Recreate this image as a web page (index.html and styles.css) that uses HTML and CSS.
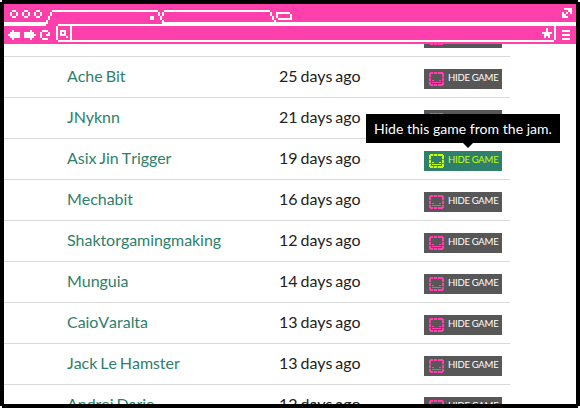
FILE: index.html
```html
<!DOCTYPE html>
<html lang="en">
<head>
<meta charset="utf-8">
<title>Jam entries</title>
<link rel="stylesheet" href="styles.css">
</head>
<body>
<div class="window">
  <header class="chrome">
    <svg class="chrome-art" viewBox="2 2 286 20" width="572" height="40" shape-rendering="crispEdges" aria-hidden="true">
      <defs>
        <path id="ring" d="M1 0h2v1h-2zM0 1h1v2h-1zM3 1h1v2h-1zM1 3h2v1h-2z"/>
      </defs>
      <use href="#ring" x="5" y="5"/><use href="#ring" x="11" y="5"/><use href="#ring" x="17" y="5"/>
      <!-- tabs -->
      <path d="M2 11h21v2h-21zM23 10h1v2h-1zM24 8h1v2h-1zM25 6h1v2h-1zM26 5h53v1h-53zM79 6h1v2h-1zM80 8h1v2h-1zM81 10h1v2h-1zM75 8h2v2h-2zM81 6h1v2h-1zM82 5h53v1h-53zM135 6h1v2h-1zM136 8h1v2h-1zM137 10h1v1h-1zM82 11h206v2h-206z"/>
      <path d="M138 6h7v1h-7zM138 7h1v2h-1zM139 9h7v1h-7zM145 7h1v2h-1z"/>
      <path d="M282 4h4v3h-1v-1h-1v1h-1v-1h1v-1h-2zM281 6h1v1h1v1h1v1h-3zM283 6h1v1h-1z"/>
      <!-- address bar -->
      <path d="M29 12h53v1h-53zM28 13h1v7h-1zM29 20h248v1h-248zM35 13h1v7h-1zM277 13h1v7h-1z"/>
      <path fill-rule="evenodd" d="M30 15h3v3h-3zM31 16v1h1v-1zM33 18h1v1h-1z"/>
      <path d="M4 17h1v-1h1v-1h1v1h3v3h-3v1h-1v-1h-1v-1h-1zM12 16h3v-1h1v1h1v1h1v1h-1v1h-1v1h-1v-1h-3z"/>
      <path d="M21 15h3v1h-3zM20 16h1v3h-1zM21 19h3v1h-3zM24 16h1v2h-2v-1h1z"/>
      <path d="M273 14h1v2h-1zM271 16h5v1h-5zM272 17h3v1h-3zM272 18h1v1h-1zM274 18h1v1h-1z"/>
      <path d="M281 15h4v1h-4zM281 17h4v1h-4zM281 19h4v1h-4z"/>
    </svg>
  </header>
  <svg width="0" height="0" class="symbols" aria-hidden="true">
    <symbol id="ghost" viewBox="0 0 15 14">
      <path class="outline" fill-rule="evenodd" d="M1 0h13v1h1v12h-1v1h-13v-1h-1v-12h1zM2 2v10h11v-10z"/>
      <path d="M1 0h3v2h-3zM5 0h3v2h-3zM9 0h3v2h-3zM12 0h2v2h-2zM0 1h2v4h-2zM13 1h2v4h-2zM0 6h2v3h-2zM13 6h2v3h-2zM0 10h2v3h-2zM13 10h2v3h-2zM1 12h3v2h-3zM5 12h3v2h-3zM9 12h5v2h-5zM3 8h2v1h-2zM10 8h2v1h-2zM3 10h9v1h-9z"/>
    </symbol>
  </svg>
  <main class="page">
    <div class="table">
      <div class="row"><span class="name"></span><span class="age"></span><button class="hide"><svg class="icon"><use href="#ghost"/></svg><span class="label">HIDE GAME</span></button></div>
      <div class="row"><a class="name">Ache Bit</a><span class="age">25 days ago</span><button class="hide"><svg class="icon"><use href="#ghost"/></svg><span class="label">HIDE GAME</span></button></div>
      <div class="row"><a class="name">JNyknn</a><span class="age">21 days ago</span><button class="hide"><svg class="icon"><use href="#ghost"/></svg><span class="label">HIDE GAME</span></button></div>
      <div class="row"><a class="name">Asix Jin Trigger</a><span class="age">19 days ago</span><button class="hide active"><svg class="icon"><use href="#ghost"/></svg><span class="label">HIDE GAME</span><span class="tooltip">Hide this game from the jam.</span></button></div>
      <div class="row"><a class="name">Mechabit</a><span class="age">16 days ago</span><button class="hide"><svg class="icon"><use href="#ghost"/></svg><span class="label">HIDE GAME</span></button></div>
      <div class="row"><a class="name">Shaktorgamingmaking</a><span class="age">12 days ago</span><button class="hide"><svg class="icon"><use href="#ghost"/></svg><span class="label">HIDE GAME</span></button></div>
      <div class="row"><a class="name">Munguia</a><span class="age">14 days ago</span><button class="hide"><svg class="icon"><use href="#ghost"/></svg><span class="label">HIDE GAME</span></button></div>
      <div class="row"><a class="name">CaioVaralta</a><span class="age">13 days ago</span><button class="hide"><svg class="icon"><use href="#ghost"/></svg><span class="label">HIDE GAME</span></button></div>
      <div class="row"><a class="name">Jack Le Hamster</a><span class="age">13 days ago</span><button class="hide"><svg class="icon"><use href="#ghost"/></svg><span class="label">HIDE GAME</span></button></div>
      <div class="row"><a class="name">Andrei Darie</a><span class="age">12 days ago</span><button class="hide"><svg class="icon"><use href="#ghost"/></svg><span class="label">HIDE GAME</span></button></div>
    </div>
  </main>
</div>
</body>
</html>
```
FILE: styles.css
```css
* { box-sizing: border-box; }
body { margin: 0; background: #fff; font-family: Lato, sans-serif; }
.window {
  width: 580px;
  height: 408px;
  padding: 4px;
  background: #000;
  display: flex;
  flex-direction: column;
  clip-path: polygon(2px 0, 578px 0, 578px 2px, 580px 2px, 580px 406px, 578px 406px, 578px 408px, 2px 408px, 2px 406px, 0 406px, 0 2px, 2px 2px);
}
.chrome { height: 40px; flex: none; background: #ff3fac; }
.chrome-art { display: block; fill: #fff; }
.symbols { display: block; height: 0; flex: none; }
.page {
  flex: 1;
  min-height: 0;
  overflow: hidden;
  background: #fff;
}
.table { width: 506px; margin-top: -28px; }
.row {
  height: 41px;
  display: grid;
  grid-template-columns: 212px 145px 78px;
  padding-left: 63px;
  border-bottom: 1px solid #dadada;
  font-size: 16px;
  line-height: 38px;
  font-kerning: none;
  letter-spacing: -0.06px;
  word-spacing: -1px;
  color: #222;
  white-space: nowrap;
}
.name { color: #2e7f6c; }
.hide {
  position: relative;
  display: flex;
  align-items: center;
  width: 78px;
  height: 20px;
  margin: 12px 0 0;
  padding: 0 0 0 5px;
  border: 0;
  background: #575757;
  color: #fff;
  font: 9.5px/18px Lato, sans-serif;
  letter-spacing: -0.22px;
  word-spacing: -0.3px;
  white-space: nowrap;
}
.label { padding-bottom: 2px; }
.icon { width: 15px; height: 14px; margin-right: 4px; fill: #ff3fac; flex: none; }
.outline { opacity: 0.3; }
.hide.active { background: #2e7f6c; color: #c4ff0e; }
.active .icon { fill: #c4ff0e; }
.tooltip {
  position: absolute;
  left: -58px;
  bottom: 28px;
  width: 194px;
  height: 29px;
  background: #000;
  color: #fff;
  font-size: 14px;
  line-height: 29px;
  letter-spacing: 0.03px;
  word-spacing: 0;
  text-align: center;
}
.tooltip::after {
  content: "";
  position: absolute;
  left: 97px;
  top: 29px;
  border: 5px solid transparent;
  border-top-color: #000;
  border-bottom: 0;
}
```
